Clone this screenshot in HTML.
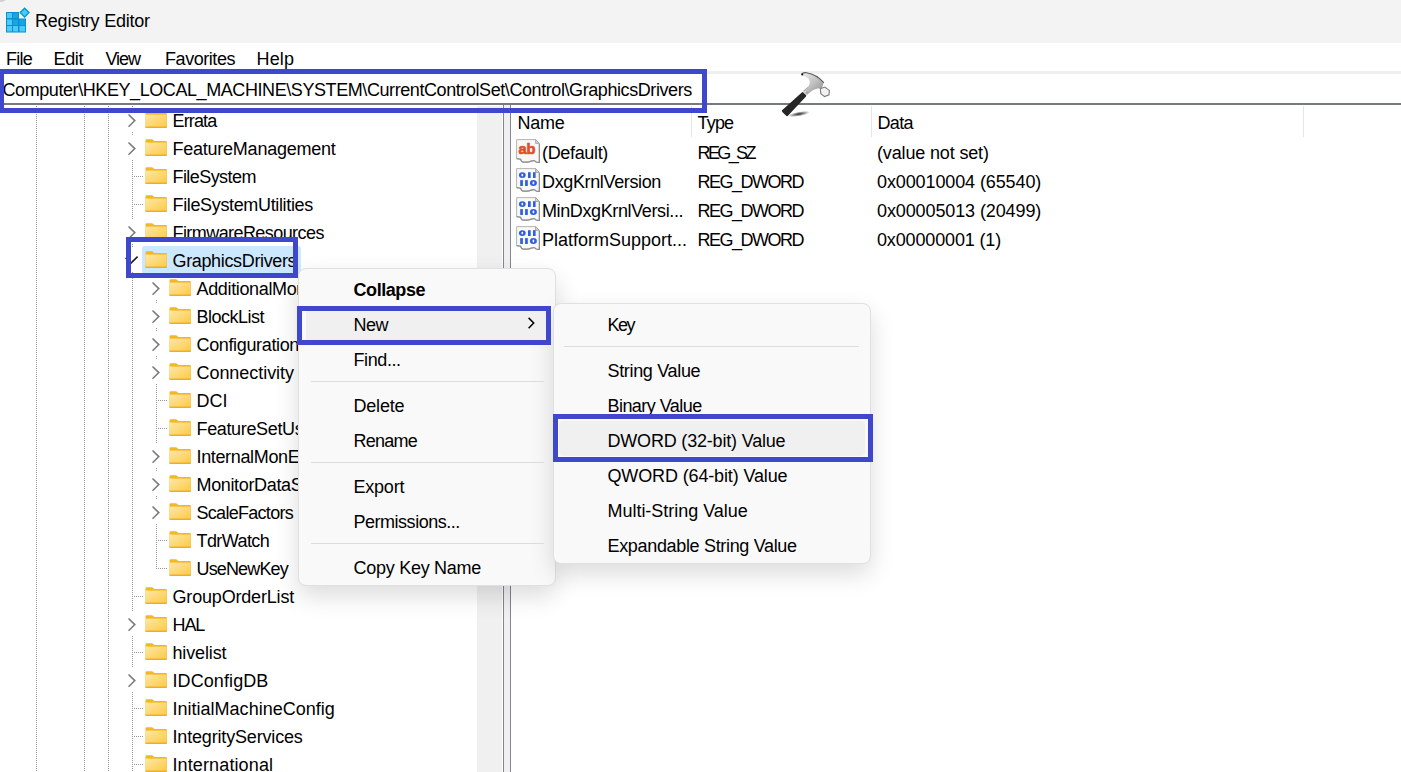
<!DOCTYPE html>
<html><head><meta charset="utf-8">
<style>
*{margin:0;padding:0;box-sizing:border-box}
html,body{width:1401px;height:772px;overflow:hidden;background:#fff;position:relative;font-family:"Liberation Sans",sans-serif;color:#000}
.a{position:absolute}
.t{position:absolute;font-size:18px;line-height:20px;white-space:nowrap}
.dv{position:absolute;width:1px;background-image:repeating-linear-gradient(to bottom,#9a9a9a 0 1px,transparent 1px 2px)}
.dh{position:absolute;height:1px;background-image:repeating-linear-gradient(to right,#9a9a9a 0 1px,transparent 1px 2px)}
.box{position:absolute;border:5px solid #3f48cc}
.fold{position:absolute;width:22px;height:17px}
.chev{position:absolute;width:10px;height:16px}
.cw{position:absolute;background:#fff;width:16px;height:24px}
</style></head><body>
<svg width="0" height="0" style="position:absolute"><defs>
<linearGradient id="fg" x1="0" y1="0" x2="1" y2="1"><stop offset="0" stop-color="#fee7a6"/><stop offset="1" stop-color="#fcca46"/></linearGradient>
<linearGradient id="hm" x1="0" y1="0" x2="1" y2="1"><stop offset="0" stop-color="#f2f2f2"/><stop offset="0.6" stop-color="#b9b9b9"/><stop offset="1" stop-color="#8c8c8c"/></linearGradient>
<radialGradient id="sh" cx="0.5" cy="0.5" r="0.5"><stop offset="0" stop-color="rgba(0,0,0,0.85)"/><stop offset="1" stop-color="rgba(0,0,0,0)"/></radialGradient>
</defs></svg>

<div class="a" style="left:0;top:0;width:1401px;height:43px;background:#f3f3f3"></div>
<div class="a" style="left:-6px;top:-4px;width:12px;height:6px;border-radius:50%;background:#cfcfcf"></div>
<svg class="a" style="left:5px;top:7px" width="26" height="27" viewBox="0 0 26 27">
  <rect x="1" y="5" width="13" height="7" fill="#0a8fd2"/>
  <rect x="1" y="11.5" width="20" height="14" fill="#0a8fd2"/>
  <rect x="2" y="6" width="5" height="5" fill="#4ccbf7"/>
  <rect x="8" y="6" width="5" height="5" fill="#17a6de"/>
  <rect x="2" y="12.5" width="5" height="5.5" fill="#4ccbf7"/>
  <rect x="8" y="12.5" width="5" height="5.5" fill="#17a6de"/>
  <rect x="14.5" y="12.5" width="5.5" height="5.5" fill="#17a6de"/>
  <rect x="2" y="19" width="5" height="5.5" fill="#4ccbf7"/>
  <rect x="8" y="19" width="5" height="5.5" fill="#4ccbf7"/>
  <rect x="14.5" y="19" width="5.5" height="5.5" fill="#4ccbf7"/>
  <path d="M19.6 1.2 L24 5.6 L19.6 10 L15.2 5.6 Z" fill="#4ccbf7" stroke="#0a8fd2" stroke-width="1.3"/>
</svg>
<div class="t" style="left:35px;top:11px;letter-spacing:-0.21px;">Registry Editor</div>
<div class="t" style="left:6px;top:49px;letter-spacing:-0.77px;">File</div>
<div class="t" style="left:53.6px;top:49px;letter-spacing:-0.37px;">Edit</div>
<div class="t" style="left:105.4px;top:49px;letter-spacing:-1.0px;">View</div>
<div class="t" style="left:165px;top:49px;letter-spacing:-0.44px;">Favorites</div>
<div class="t" style="left:256.6px;top:49px;letter-spacing:0.1px;">Help</div>
<div class="a" style="left:0;top:71px;width:1401px;height:3px;background:#efefef"></div>
<div class="a" style="left:0;top:103px;width:1401px;height:2px;background:#767a7f"></div>
<div class="t" style="left:2.5px;top:80px;letter-spacing:-0.42px;">Computer\HKEY_LOCAL_MACHINE\SYSTEM\CurrentControlSet\Control\GraphicsDrivers</div>
<svg class="a" style="left:775px;top:68px" width="60" height="54" viewBox="0 0 60 54">
<ellipse cx="24" cy="46" rx="11" ry="2.4" fill="url(#sh)" transform="rotate(-10 24 46)"/>
<path d="M28 23 L33.5 18.2 L37.5 21.8 L32 27 Z" fill="#a9a9a9"/>
<path d="M29.5 24.2 L34.5 19.6" stroke="#e0e0e0" stroke-width="1.2"/>
<path d="M8.2 41.2 L26.8 24.4 Q27.6 23.8 28.3 24.4 L31 27 Q31.6 27.7 31 28.4 L13.2 47.6 Q12.2 48.7 11.2 47.8 L7.3 43.9 Q6.4 42.9 7.2 42 Z" fill="#262626"/>
<path d="M26.4 6.4 Q27.4 4.4 30.6 4.5 Q41 5.8 49 14.6 L46.6 20.6 L42.4 20.4 Q38.2 21.2 34.3 24.8 L30.8 22.2 Q34.8 17.6 34.8 13.8 Q34 9.2 27.6 8.1 Q26.3 7.6 26.4 6.4 Z" fill="url(#hm)"/>
<path d="M27 5.6 Q29 4.3 31.5 4.7 Q41.5 6.2 48.8 14.6" fill="none" stroke="#5a5a5a" stroke-width="1.1"/>
<path d="M45.3 20.8 L49.8 19 L54.4 22.4 L54 26.8 L49.6 28.6 L45.8 25.6 Z" fill="#f2f2f2" stroke="#7c7c7c" stroke-width="1.1"/>
<circle cx="27.2" cy="6.4" r="1.1" fill="#1a1a1a"/>
</svg>
<div class="a" style="left:477px;top:106px;width:25px;height:666px;background:#f0f0f0"></div>
<div class="a" style="left:503px;top:105px;width:1px;height:667px;background:#80868b"></div>
<div class="a" style="left:504px;top:105px;width:6px;height:667px;background:#f0f0f0"></div>
<div class="a" style="left:510px;top:105px;width:1px;height:667px;background:#80868b"></div>
<div class="a" style="left:0;top:105px;width:477px;height:667px;overflow:hidden">
<div class="dv" style="left:36px;top:1px;height:667px"></div>
<div class="dv" style="left:84px;top:1px;height:667px"></div>
<div class="dv" style="left:108px;top:1px;height:667px"></div>
<div class="dv" style="left:132px;top:1px;height:667px"></div>
<div class="dv" style="left:156px;top:167px;height:297px"></div>
<div class="cw" style="left:124px;top:3px"></div>
<svg class="chev" style="left:127px;top:8px" width="10" height="16" viewBox="0 0 10 16"><path d="M1.5 1.5 L7.8 7.6 L1.5 13.7" fill="none" stroke="#7d7d7d" stroke-width="1.6"/></svg>
<svg class="fold" style="left:145px;top:6px" width="22" height="17" viewBox="0 0 22 17"><path d="M0.5 1.2 Q0.5 0.2 1.5 0.2 L7 0.2 Q7.8 0.2 8.3 0.9 L9.2 2 L21 2 Q21.8 2 21.8 2.8 L21.8 16 Q21.8 16.8 21 16.8 L1.3 16.8 Q0.5 16.8 0.5 16 Z" fill="#f4b622"/>
<rect x="0.5" y="3.6" width="21" height="12.4" fill="url(#fg)"/>
<rect x="0.5" y="15.6" width="21.3" height="1.2" fill="#eaa91c"/></svg>
<div class="t" style="left:172.5px;top:6px;letter-spacing:-0.86px;">Errata</div>
<div class="cw" style="left:124px;top:31px"></div>
<svg class="chev" style="left:127px;top:36px" width="10" height="16" viewBox="0 0 10 16"><path d="M1.5 1.5 L7.8 7.6 L1.5 13.7" fill="none" stroke="#7d7d7d" stroke-width="1.6"/></svg>
<svg class="fold" style="left:145px;top:34px" width="22" height="17" viewBox="0 0 22 17"><path d="M0.5 1.2 Q0.5 0.2 1.5 0.2 L7 0.2 Q7.8 0.2 8.3 0.9 L9.2 2 L21 2 Q21.8 2 21.8 2.8 L21.8 16 Q21.8 16.8 21 16.8 L1.3 16.8 Q0.5 16.8 0.5 16 Z" fill="#f4b622"/>
<rect x="0.5" y="3.6" width="21" height="12.4" fill="url(#fg)"/>
<rect x="0.5" y="15.6" width="21.3" height="1.2" fill="#eaa91c"/></svg>
<div class="t" style="left:172.5px;top:34px;letter-spacing:-0.24px;">FeatureManagement</div>
<div class="dh" style="left:132px;top:71px;width:11px"></div>
<svg class="fold" style="left:145px;top:62px" width="22" height="17" viewBox="0 0 22 17"><path d="M0.5 1.2 Q0.5 0.2 1.5 0.2 L7 0.2 Q7.8 0.2 8.3 0.9 L9.2 2 L21 2 Q21.8 2 21.8 2.8 L21.8 16 Q21.8 16.8 21 16.8 L1.3 16.8 Q0.5 16.8 0.5 16 Z" fill="#f4b622"/>
<rect x="0.5" y="3.6" width="21" height="12.4" fill="url(#fg)"/>
<rect x="0.5" y="15.6" width="21.3" height="1.2" fill="#eaa91c"/></svg>
<div class="t" style="left:172.5px;top:62px;letter-spacing:-0.57px;">FileSystem</div>
<div class="dh" style="left:132px;top:99px;width:11px"></div>
<svg class="fold" style="left:145px;top:90px" width="22" height="17" viewBox="0 0 22 17"><path d="M0.5 1.2 Q0.5 0.2 1.5 0.2 L7 0.2 Q7.8 0.2 8.3 0.9 L9.2 2 L21 2 Q21.8 2 21.8 2.8 L21.8 16 Q21.8 16.8 21 16.8 L1.3 16.8 Q0.5 16.8 0.5 16 Z" fill="#f4b622"/>
<rect x="0.5" y="3.6" width="21" height="12.4" fill="url(#fg)"/>
<rect x="0.5" y="15.6" width="21.3" height="1.2" fill="#eaa91c"/></svg>
<div class="t" style="left:172.5px;top:90px;letter-spacing:-0.35px;">FileSystemUtilities</div>
<div class="cw" style="left:124px;top:115px"></div>
<svg class="chev" style="left:127px;top:120px" width="10" height="16" viewBox="0 0 10 16"><path d="M1.5 1.5 L7.8 7.6 L1.5 13.7" fill="none" stroke="#7d7d7d" stroke-width="1.6"/></svg>
<svg class="fold" style="left:145px;top:118px" width="22" height="17" viewBox="0 0 22 17"><path d="M0.5 1.2 Q0.5 0.2 1.5 0.2 L7 0.2 Q7.8 0.2 8.3 0.9 L9.2 2 L21 2 Q21.8 2 21.8 2.8 L21.8 16 Q21.8 16.8 21 16.8 L1.3 16.8 Q0.5 16.8 0.5 16 Z" fill="#f4b622"/>
<rect x="0.5" y="3.6" width="21" height="12.4" fill="url(#fg)"/>
<rect x="0.5" y="15.6" width="21.3" height="1.2" fill="#eaa91c"/></svg>
<div class="t" style="left:172.5px;top:118px;letter-spacing:-0.57px;">FirmwareResources</div>
<div class="cw" style="left:124px;top:143px"></div>
<div class="a" style="left:142px;top:141px;width:159px;height:28px;background:#cce8ff;border-radius:3px"></div>
<svg class="a" style="left:123px;top:148px" width="16" height="16" viewBox="0 0 16 16"><path d="M2.6 4.7 L8 10.1 L14.6 3.6" fill="none" stroke="#1c1c1c" stroke-width="1.6"/></svg>
<svg class="fold" style="left:145px;top:146px" width="22" height="17" viewBox="0 0 22 17"><path d="M0.5 1.2 Q0.5 0.2 1.5 0.2 L7 0.2 Q7.8 0.2 8.3 0.9 L9.2 2 L21 2 Q21.8 2 21.8 2.8 L21.8 16 Q21.8 16.8 21 16.8 L1.3 16.8 Q0.5 16.8 0.5 16 Z" fill="#f4b622"/>
<rect x="0.5" y="3.6" width="21" height="12.4" fill="url(#fg)"/>
<rect x="0.5" y="15.6" width="21.3" height="1.2" fill="#eaa91c"/></svg>
<div class="t" style="left:172.5px;top:146px;letter-spacing:-0.35px;">GraphicsDrivers</div>
<div class="cw" style="left:148px;top:171px"></div>
<svg class="chev" style="left:151px;top:176px" width="10" height="16" viewBox="0 0 10 16"><path d="M1.5 1.5 L7.8 7.6 L1.5 13.7" fill="none" stroke="#7d7d7d" stroke-width="1.6"/></svg>
<svg class="fold" style="left:169px;top:174px" width="22" height="17" viewBox="0 0 22 17"><path d="M0.5 1.2 Q0.5 0.2 1.5 0.2 L7 0.2 Q7.8 0.2 8.3 0.9 L9.2 2 L21 2 Q21.8 2 21.8 2.8 L21.8 16 Q21.8 16.8 21 16.8 L1.3 16.8 Q0.5 16.8 0.5 16 Z" fill="#f4b622"/>
<rect x="0.5" y="3.6" width="21" height="12.4" fill="url(#fg)"/>
<rect x="0.5" y="15.6" width="21.3" height="1.2" fill="#eaa91c"/></svg>
<div class="t" style="left:196.5px;top:174px;letter-spacing:-0.35px;">AdditionalMonitors</div>
<div class="cw" style="left:148px;top:199px"></div>
<svg class="chev" style="left:151px;top:204px" width="10" height="16" viewBox="0 0 10 16"><path d="M1.5 1.5 L7.8 7.6 L1.5 13.7" fill="none" stroke="#7d7d7d" stroke-width="1.6"/></svg>
<svg class="fold" style="left:169px;top:202px" width="22" height="17" viewBox="0 0 22 17"><path d="M0.5 1.2 Q0.5 0.2 1.5 0.2 L7 0.2 Q7.8 0.2 8.3 0.9 L9.2 2 L21 2 Q21.8 2 21.8 2.8 L21.8 16 Q21.8 16.8 21 16.8 L1.3 16.8 Q0.5 16.8 0.5 16 Z" fill="#f4b622"/>
<rect x="0.5" y="3.6" width="21" height="12.4" fill="url(#fg)"/>
<rect x="0.5" y="15.6" width="21.3" height="1.2" fill="#eaa91c"/></svg>
<div class="t" style="left:196.5px;top:202px;letter-spacing:-0.49px;">BlockList</div>
<div class="cw" style="left:148px;top:227px"></div>
<svg class="chev" style="left:151px;top:232px" width="10" height="16" viewBox="0 0 10 16"><path d="M1.5 1.5 L7.8 7.6 L1.5 13.7" fill="none" stroke="#7d7d7d" stroke-width="1.6"/></svg>
<svg class="fold" style="left:169px;top:230px" width="22" height="17" viewBox="0 0 22 17"><path d="M0.5 1.2 Q0.5 0.2 1.5 0.2 L7 0.2 Q7.8 0.2 8.3 0.9 L9.2 2 L21 2 Q21.8 2 21.8 2.8 L21.8 16 Q21.8 16.8 21 16.8 L1.3 16.8 Q0.5 16.8 0.5 16 Z" fill="#f4b622"/>
<rect x="0.5" y="3.6" width="21" height="12.4" fill="url(#fg)"/>
<rect x="0.5" y="15.6" width="21.3" height="1.2" fill="#eaa91c"/></svg>
<div class="t" style="left:196.5px;top:230px;letter-spacing:-0.35px;">Configuration</div>
<div class="cw" style="left:148px;top:255px"></div>
<svg class="chev" style="left:151px;top:260px" width="10" height="16" viewBox="0 0 10 16"><path d="M1.5 1.5 L7.8 7.6 L1.5 13.7" fill="none" stroke="#7d7d7d" stroke-width="1.6"/></svg>
<svg class="fold" style="left:169px;top:258px" width="22" height="17" viewBox="0 0 22 17"><path d="M0.5 1.2 Q0.5 0.2 1.5 0.2 L7 0.2 Q7.8 0.2 8.3 0.9 L9.2 2 L21 2 Q21.8 2 21.8 2.8 L21.8 16 Q21.8 16.8 21 16.8 L1.3 16.8 Q0.5 16.8 0.5 16 Z" fill="#f4b622"/>
<rect x="0.5" y="3.6" width="21" height="12.4" fill="url(#fg)"/>
<rect x="0.5" y="15.6" width="21.3" height="1.2" fill="#eaa91c"/></svg>
<div class="t" style="left:196.5px;top:258px;letter-spacing:-0.05px;">Connectivity</div>
<div class="dh" style="left:156px;top:295px;width:11px"></div>
<svg class="fold" style="left:169px;top:286px" width="22" height="17" viewBox="0 0 22 17"><path d="M0.5 1.2 Q0.5 0.2 1.5 0.2 L7 0.2 Q7.8 0.2 8.3 0.9 L9.2 2 L21 2 Q21.8 2 21.8 2.8 L21.8 16 Q21.8 16.8 21 16.8 L1.3 16.8 Q0.5 16.8 0.5 16 Z" fill="#f4b622"/>
<rect x="0.5" y="3.6" width="21" height="12.4" fill="url(#fg)"/>
<rect x="0.5" y="15.6" width="21.3" height="1.2" fill="#eaa91c"/></svg>
<div class="t" style="left:196.5px;top:286px;letter-spacing:0.05px;">DCI</div>
<div class="dh" style="left:156px;top:323px;width:11px"></div>
<svg class="fold" style="left:169px;top:314px" width="22" height="17" viewBox="0 0 22 17"><path d="M0.5 1.2 Q0.5 0.2 1.5 0.2 L7 0.2 Q7.8 0.2 8.3 0.9 L9.2 2 L21 2 Q21.8 2 21.8 2.8 L21.8 16 Q21.8 16.8 21 16.8 L1.3 16.8 Q0.5 16.8 0.5 16 Z" fill="#f4b622"/>
<rect x="0.5" y="3.6" width="21" height="12.4" fill="url(#fg)"/>
<rect x="0.5" y="15.6" width="21.3" height="1.2" fill="#eaa91c"/></svg>
<div class="t" style="left:196.5px;top:314px;letter-spacing:-0.35px;">FeatureSetUsage</div>
<div class="cw" style="left:148px;top:339px"></div>
<svg class="chev" style="left:151px;top:344px" width="10" height="16" viewBox="0 0 10 16"><path d="M1.5 1.5 L7.8 7.6 L1.5 13.7" fill="none" stroke="#7d7d7d" stroke-width="1.6"/></svg>
<svg class="fold" style="left:169px;top:342px" width="22" height="17" viewBox="0 0 22 17"><path d="M0.5 1.2 Q0.5 0.2 1.5 0.2 L7 0.2 Q7.8 0.2 8.3 0.9 L9.2 2 L21 2 Q21.8 2 21.8 2.8 L21.8 16 Q21.8 16.8 21 16.8 L1.3 16.8 Q0.5 16.8 0.5 16 Z" fill="#f4b622"/>
<rect x="0.5" y="3.6" width="21" height="12.4" fill="url(#fg)"/>
<rect x="0.5" y="15.6" width="21.3" height="1.2" fill="#eaa91c"/></svg>
<div class="t" style="left:196.5px;top:342px;letter-spacing:-0.35px;">InternalMonEdid</div>
<div class="cw" style="left:148px;top:367px"></div>
<svg class="chev" style="left:151px;top:372px" width="10" height="16" viewBox="0 0 10 16"><path d="M1.5 1.5 L7.8 7.6 L1.5 13.7" fill="none" stroke="#7d7d7d" stroke-width="1.6"/></svg>
<svg class="fold" style="left:169px;top:370px" width="22" height="17" viewBox="0 0 22 17"><path d="M0.5 1.2 Q0.5 0.2 1.5 0.2 L7 0.2 Q7.8 0.2 8.3 0.9 L9.2 2 L21 2 Q21.8 2 21.8 2.8 L21.8 16 Q21.8 16.8 21 16.8 L1.3 16.8 Q0.5 16.8 0.5 16 Z" fill="#f4b622"/>
<rect x="0.5" y="3.6" width="21" height="12.4" fill="url(#fg)"/>
<rect x="0.5" y="15.6" width="21.3" height="1.2" fill="#eaa91c"/></svg>
<div class="t" style="left:196.5px;top:370px;letter-spacing:-0.35px;">MonitorDataStore</div>
<div class="cw" style="left:148px;top:395px"></div>
<svg class="chev" style="left:151px;top:400px" width="10" height="16" viewBox="0 0 10 16"><path d="M1.5 1.5 L7.8 7.6 L1.5 13.7" fill="none" stroke="#7d7d7d" stroke-width="1.6"/></svg>
<svg class="fold" style="left:169px;top:398px" width="22" height="17" viewBox="0 0 22 17"><path d="M0.5 1.2 Q0.5 0.2 1.5 0.2 L7 0.2 Q7.8 0.2 8.3 0.9 L9.2 2 L21 2 Q21.8 2 21.8 2.8 L21.8 16 Q21.8 16.8 21 16.8 L1.3 16.8 Q0.5 16.8 0.5 16 Z" fill="#f4b622"/>
<rect x="0.5" y="3.6" width="21" height="12.4" fill="url(#fg)"/>
<rect x="0.5" y="15.6" width="21.3" height="1.2" fill="#eaa91c"/></svg>
<div class="t" style="left:196.5px;top:398px;letter-spacing:-0.71px;">ScaleFactors</div>
<div class="dh" style="left:156px;top:435px;width:11px"></div>
<svg class="fold" style="left:169px;top:426px" width="22" height="17" viewBox="0 0 22 17"><path d="M0.5 1.2 Q0.5 0.2 1.5 0.2 L7 0.2 Q7.8 0.2 8.3 0.9 L9.2 2 L21 2 Q21.8 2 21.8 2.8 L21.8 16 Q21.8 16.8 21 16.8 L1.3 16.8 Q0.5 16.8 0.5 16 Z" fill="#f4b622"/>
<rect x="0.5" y="3.6" width="21" height="12.4" fill="url(#fg)"/>
<rect x="0.5" y="15.6" width="21.3" height="1.2" fill="#eaa91c"/></svg>
<div class="t" style="left:196.5px;top:426px;letter-spacing:-0.59px;">TdrWatch</div>
<div class="dh" style="left:156px;top:463px;width:11px"></div>
<svg class="fold" style="left:169px;top:454px" width="22" height="17" viewBox="0 0 22 17"><path d="M0.5 1.2 Q0.5 0.2 1.5 0.2 L7 0.2 Q7.8 0.2 8.3 0.9 L9.2 2 L21 2 Q21.8 2 21.8 2.8 L21.8 16 Q21.8 16.8 21 16.8 L1.3 16.8 Q0.5 16.8 0.5 16 Z" fill="#f4b622"/>
<rect x="0.5" y="3.6" width="21" height="12.4" fill="url(#fg)"/>
<rect x="0.5" y="15.6" width="21.3" height="1.2" fill="#eaa91c"/></svg>
<div class="t" style="left:196.5px;top:454px;letter-spacing:-0.85px;">UseNewKey</div>
<div class="dh" style="left:132px;top:491px;width:11px"></div>
<svg class="fold" style="left:145px;top:482px" width="22" height="17" viewBox="0 0 22 17"><path d="M0.5 1.2 Q0.5 0.2 1.5 0.2 L7 0.2 Q7.8 0.2 8.3 0.9 L9.2 2 L21 2 Q21.8 2 21.8 2.8 L21.8 16 Q21.8 16.8 21 16.8 L1.3 16.8 Q0.5 16.8 0.5 16 Z" fill="#f4b622"/>
<rect x="0.5" y="3.6" width="21" height="12.4" fill="url(#fg)"/>
<rect x="0.5" y="15.6" width="21.3" height="1.2" fill="#eaa91c"/></svg>
<div class="t" style="left:172.5px;top:482px;letter-spacing:-0.18px;">GroupOrderList</div>
<div class="cw" style="left:124px;top:507px"></div>
<svg class="chev" style="left:127px;top:512px" width="10" height="16" viewBox="0 0 10 16"><path d="M1.5 1.5 L7.8 7.6 L1.5 13.7" fill="none" stroke="#7d7d7d" stroke-width="1.6"/></svg>
<svg class="fold" style="left:145px;top:510px" width="22" height="17" viewBox="0 0 22 17"><path d="M0.5 1.2 Q0.5 0.2 1.5 0.2 L7 0.2 Q7.8 0.2 8.3 0.9 L9.2 2 L21 2 Q21.8 2 21.8 2.8 L21.8 16 Q21.8 16.8 21 16.8 L1.3 16.8 Q0.5 16.8 0.5 16 Z" fill="#f4b622"/>
<rect x="0.5" y="3.6" width="21" height="12.4" fill="url(#fg)"/>
<rect x="0.5" y="15.6" width="21.3" height="1.2" fill="#eaa91c"/></svg>
<div class="t" style="left:172.5px;top:510px;letter-spacing:-1.1px;">HAL</div>
<div class="dh" style="left:132px;top:547px;width:11px"></div>
<svg class="fold" style="left:145px;top:538px" width="22" height="17" viewBox="0 0 22 17"><path d="M0.5 1.2 Q0.5 0.2 1.5 0.2 L7 0.2 Q7.8 0.2 8.3 0.9 L9.2 2 L21 2 Q21.8 2 21.8 2.8 L21.8 16 Q21.8 16.8 21 16.8 L1.3 16.8 Q0.5 16.8 0.5 16 Z" fill="#f4b622"/>
<rect x="0.5" y="3.6" width="21" height="12.4" fill="url(#fg)"/>
<rect x="0.5" y="15.6" width="21.3" height="1.2" fill="#eaa91c"/></svg>
<div class="t" style="left:172.5px;top:538px;letter-spacing:-0.14px;">hivelist</div>
<div class="cw" style="left:124px;top:563px"></div>
<svg class="chev" style="left:127px;top:568px" width="10" height="16" viewBox="0 0 10 16"><path d="M1.5 1.5 L7.8 7.6 L1.5 13.7" fill="none" stroke="#7d7d7d" stroke-width="1.6"/></svg>
<svg class="fold" style="left:145px;top:566px" width="22" height="17" viewBox="0 0 22 17"><path d="M0.5 1.2 Q0.5 0.2 1.5 0.2 L7 0.2 Q7.8 0.2 8.3 0.9 L9.2 2 L21 2 Q21.8 2 21.8 2.8 L21.8 16 Q21.8 16.8 21 16.8 L1.3 16.8 Q0.5 16.8 0.5 16 Z" fill="#f4b622"/>
<rect x="0.5" y="3.6" width="21" height="12.4" fill="url(#fg)"/>
<rect x="0.5" y="15.6" width="21.3" height="1.2" fill="#eaa91c"/></svg>
<div class="t" style="left:172.5px;top:566px;letter-spacing:0.09px;">IDConfigDB</div>
<div class="dh" style="left:132px;top:603px;width:11px"></div>
<svg class="fold" style="left:145px;top:594px" width="22" height="17" viewBox="0 0 22 17"><path d="M0.5 1.2 Q0.5 0.2 1.5 0.2 L7 0.2 Q7.8 0.2 8.3 0.9 L9.2 2 L21 2 Q21.8 2 21.8 2.8 L21.8 16 Q21.8 16.8 21 16.8 L1.3 16.8 Q0.5 16.8 0.5 16 Z" fill="#f4b622"/>
<rect x="0.5" y="3.6" width="21" height="12.4" fill="url(#fg)"/>
<rect x="0.5" y="15.6" width="21.3" height="1.2" fill="#eaa91c"/></svg>
<div class="t" style="left:172.5px;top:594px;letter-spacing:0.01px;">InitialMachineConfig</div>
<div class="dh" style="left:132px;top:631px;width:11px"></div>
<svg class="fold" style="left:145px;top:622px" width="22" height="17" viewBox="0 0 22 17"><path d="M0.5 1.2 Q0.5 0.2 1.5 0.2 L7 0.2 Q7.8 0.2 8.3 0.9 L9.2 2 L21 2 Q21.8 2 21.8 2.8 L21.8 16 Q21.8 16.8 21 16.8 L1.3 16.8 Q0.5 16.8 0.5 16 Z" fill="#f4b622"/>
<rect x="0.5" y="3.6" width="21" height="12.4" fill="url(#fg)"/>
<rect x="0.5" y="15.6" width="21.3" height="1.2" fill="#eaa91c"/></svg>
<div class="t" style="left:172.5px;top:622px;letter-spacing:-0.17px;">IntegrityServices</div>
<div class="dh" style="left:132px;top:659px;width:11px"></div>
<svg class="fold" style="left:145px;top:650px" width="22" height="17" viewBox="0 0 22 17"><path d="M0.5 1.2 Q0.5 0.2 1.5 0.2 L7 0.2 Q7.8 0.2 8.3 0.9 L9.2 2 L21 2 Q21.8 2 21.8 2.8 L21.8 16 Q21.8 16.8 21 16.8 L1.3 16.8 Q0.5 16.8 0.5 16 Z" fill="#f4b622"/>
<rect x="0.5" y="3.6" width="21" height="12.4" fill="url(#fg)"/>
<rect x="0.5" y="15.6" width="21.3" height="1.2" fill="#eaa91c"/></svg>
<div class="t" style="left:172.5px;top:650px;letter-spacing:0.12px;">International</div>
</div>
<div class="a" style="left:691px;top:106px;width:1px;height:31px;background:#e5e5e5"></div>
<div class="a" style="left:871px;top:106px;width:1px;height:31px;background:#e5e5e5"></div>
<div class="a" style="left:1303px;top:106px;width:1px;height:31px;background:#e5e5e5"></div>
<div class="t" style="left:517.5px;top:113px;letter-spacing:-0.27px;">Name</div>
<div class="t" style="left:697.5px;top:113px;letter-spacing:-0.8px;">Type</div>
<div class="t" style="left:877.5px;top:113px;letter-spacing:-0.63px;">Data</div>
<svg class="a" style="left:516px;top:139px" width="24" height="24" viewBox="0 0 24 24"><path d="M0.6 0.6 L19.6 0.6 L23.4 4.4 L23.4 23.4 L20.5 23.4 Q18.8 21.2 16.5 21.8 L14.5 22.3 Q13.5 23.2 11 23.1 L7 23.1 Q5.2 23.1 4.6 20.2 L0.6 19.6 Z" fill="#f8f8f8" stroke="#b4b4b4" stroke-width="1"/>
<path d="M23.4 5 L23.4 23.4 L20.6 23.4" fill="none" stroke="#8e8e8e" stroke-width="1.3"/>
<path d="M0.6 19.6 L4.6 20.2 Q5.2 23.1 7 23.1 L11 23.1 Q13.5 23.2 14.5 22.3 L16.5 21.8 Q18.8 21.2 20.5 23.4" fill="none" stroke="#8e8e8e" stroke-width="1.2"/>
<path d="M19.6 0.6 L19.6 4.4 L23.4 4.4 Z" fill="#d4d4d4" stroke="#9a9a9a" stroke-width="0.8"/>
<text x="2.4" y="15.2" font-family="Liberation Sans" font-weight="bold" font-size="14.6" fill="#e0512b" stroke="#e0512b" stroke-width="0.7" letter-spacing="-0.1">ab</text></svg>
<div class="t" style="left:542px;top:143px;letter-spacing:-0.34px;">(Default)</div>
<div class="t" style="left:697.5px;top:143px;letter-spacing:-2.6px;">REG_SZ</div>
<div class="t" style="left:877px;top:143px;letter-spacing:-0.15px;">(value not set)</div>
<svg class="a" style="left:516px;top:168px" width="24" height="24" viewBox="0 0 24 24"><path d="M0.6 0.6 L19.6 0.6 L23.4 4.4 L23.4 23.4 L20.5 23.4 Q18.8 21.2 16.5 21.8 L14.5 22.3 Q13.5 23.2 11 23.1 L7 23.1 Q5.2 23.1 4.6 20.2 L0.6 19.6 Z" fill="#f8f8f8" stroke="#b4b4b4" stroke-width="1"/>
<path d="M23.4 5 L23.4 23.4 L20.6 23.4" fill="none" stroke="#8e8e8e" stroke-width="1.3"/>
<path d="M0.6 19.6 L4.6 20.2 Q5.2 23.1 7 23.1 L11 23.1 Q13.5 23.2 14.5 22.3 L16.5 21.8 Q18.8 21.2 20.5 23.4" fill="none" stroke="#8e8e8e" stroke-width="1.2"/>
<path d="M19.6 0.6 L19.6 4.4 L23.4 4.4 Z" fill="#d4d4d4" stroke="#9a9a9a" stroke-width="0.8"/>
<g fill="#2f5ee0"><ellipse cx="6.3" cy="7.1" rx="3.4" ry="2.9"/><rect x="12" y="4.2" width="2.7" height="5.8"/><rect x="17" y="4.2" width="2.6" height="5.8"/>
<rect x="4.2" y="12.1" width="2.7" height="5.9"/><rect x="9.1" y="12.1" width="2.7" height="5.9"/><ellipse cx="17.4" cy="15" rx="3.5" ry="2.9"/></g>
<g fill="#f8f8f8"><ellipse cx="6.3" cy="7.1" rx="0.9" ry="1.4"/><ellipse cx="17.4" cy="15" rx="0.9" ry="1.4"/></g></svg>
<div class="t" style="left:542px;top:172px;letter-spacing:-0.36px;">DxgKrnlVersion</div>
<div class="t" style="left:697.5px;top:172px;letter-spacing:-1.5px;">REG_DWORD</div>
<div class="t" style="left:877px;top:172px;letter-spacing:-0.11px;">0x00010004 (65540)</div>
<svg class="a" style="left:516px;top:197px" width="24" height="24" viewBox="0 0 24 24"><path d="M0.6 0.6 L19.6 0.6 L23.4 4.4 L23.4 23.4 L20.5 23.4 Q18.8 21.2 16.5 21.8 L14.5 22.3 Q13.5 23.2 11 23.1 L7 23.1 Q5.2 23.1 4.6 20.2 L0.6 19.6 Z" fill="#f8f8f8" stroke="#b4b4b4" stroke-width="1"/>
<path d="M23.4 5 L23.4 23.4 L20.6 23.4" fill="none" stroke="#8e8e8e" stroke-width="1.3"/>
<path d="M0.6 19.6 L4.6 20.2 Q5.2 23.1 7 23.1 L11 23.1 Q13.5 23.2 14.5 22.3 L16.5 21.8 Q18.8 21.2 20.5 23.4" fill="none" stroke="#8e8e8e" stroke-width="1.2"/>
<path d="M19.6 0.6 L19.6 4.4 L23.4 4.4 Z" fill="#d4d4d4" stroke="#9a9a9a" stroke-width="0.8"/>
<g fill="#2f5ee0"><ellipse cx="6.3" cy="7.1" rx="3.4" ry="2.9"/><rect x="12" y="4.2" width="2.7" height="5.8"/><rect x="17" y="4.2" width="2.6" height="5.8"/>
<rect x="4.2" y="12.1" width="2.7" height="5.9"/><rect x="9.1" y="12.1" width="2.7" height="5.9"/><ellipse cx="17.4" cy="15" rx="3.5" ry="2.9"/></g>
<g fill="#f8f8f8"><ellipse cx="6.3" cy="7.1" rx="0.9" ry="1.4"/><ellipse cx="17.4" cy="15" rx="0.9" ry="1.4"/></g></svg>
<div class="t" style="left:542px;top:201px;letter-spacing:-0.38px;">MinDxgKrnlVersi...</div>
<div class="t" style="left:697.5px;top:201px;letter-spacing:-1.5px;">REG_DWORD</div>
<div class="t" style="left:877px;top:201px;letter-spacing:-0.11px;">0x00005013 (20499)</div>
<svg class="a" style="left:516px;top:226px" width="24" height="24" viewBox="0 0 24 24"><path d="M0.6 0.6 L19.6 0.6 L23.4 4.4 L23.4 23.4 L20.5 23.4 Q18.8 21.2 16.5 21.8 L14.5 22.3 Q13.5 23.2 11 23.1 L7 23.1 Q5.2 23.1 4.6 20.2 L0.6 19.6 Z" fill="#f8f8f8" stroke="#b4b4b4" stroke-width="1"/>
<path d="M23.4 5 L23.4 23.4 L20.6 23.4" fill="none" stroke="#8e8e8e" stroke-width="1.3"/>
<path d="M0.6 19.6 L4.6 20.2 Q5.2 23.1 7 23.1 L11 23.1 Q13.5 23.2 14.5 22.3 L16.5 21.8 Q18.8 21.2 20.5 23.4" fill="none" stroke="#8e8e8e" stroke-width="1.2"/>
<path d="M19.6 0.6 L19.6 4.4 L23.4 4.4 Z" fill="#d4d4d4" stroke="#9a9a9a" stroke-width="0.8"/>
<g fill="#2f5ee0"><ellipse cx="6.3" cy="7.1" rx="3.4" ry="2.9"/><rect x="12" y="4.2" width="2.7" height="5.8"/><rect x="17" y="4.2" width="2.6" height="5.8"/>
<rect x="4.2" y="12.1" width="2.7" height="5.9"/><rect x="9.1" y="12.1" width="2.7" height="5.9"/><ellipse cx="17.4" cy="15" rx="3.5" ry="2.9"/></g>
<g fill="#f8f8f8"><ellipse cx="6.3" cy="7.1" rx="0.9" ry="1.4"/><ellipse cx="17.4" cy="15" rx="0.9" ry="1.4"/></g></svg>
<div class="t" style="left:542px;top:230px;letter-spacing:0.0px;">PlatformSupport...</div>
<div class="t" style="left:697.5px;top:230px;letter-spacing:-1.5px;">REG_DWORD</div>
<div class="t" style="left:877px;top:230px;letter-spacing:-0.15px;">0x00000001 (1)</div>
<div class="a" style="left:298px;top:268px;width:258px;height:318px;background:#f9f9f9;border:1px solid #e0e0e0;border-radius:8px;box-shadow:0 10px 24px rgba(0,0,0,0.14)"></div>
<div class="a" style="left:553px;top:303px;width:318px;height:261px;background:#f9f9f9;border:1px solid #e0e0e0;border-radius:8px;box-shadow:0 10px 24px rgba(0,0,0,0.14)"></div>
<div class="a" style="left:306px;top:310px;width:244px;height:31px;background:#f0f0f0;border-radius:4px"></div>
<div class="a" style="left:559px;top:421px;width:306px;height:35px;background:#f0f0f0;border-radius:4px"></div>
<div class="a" style="left:311px;top:381px;width:233px;height:1px;background:#dcdcdc"></div>
<div class="a" style="left:311px;top:462px;width:233px;height:1px;background:#dcdcdc"></div>
<div class="a" style="left:311px;top:543px;width:233px;height:1px;background:#dcdcdc"></div>
<div class="a" style="left:564px;top:346px;width:295px;height:1px;background:#dcdcdc"></div>
<div class="t" style="left:353.5px;top:280px;letter-spacing:-0.43px;font-weight:bold">Collapse</div>
<div class="t" style="left:353.5px;top:315px;letter-spacing:-0.45px;">New</div>
<div class="t" style="left:353.5px;top:350px;letter-spacing:-0.4px;">Find...</div>
<div class="t" style="left:353.5px;top:396px;letter-spacing:-0.2px;">Delete</div>
<div class="t" style="left:353.5px;top:431px;letter-spacing:-0.74px;">Rename</div>
<div class="t" style="left:353.5px;top:477px;letter-spacing:-0.22px;">Export</div>
<div class="t" style="left:353.5px;top:512px;letter-spacing:-0.48px;">Permissions...</div>
<div class="t" style="left:353.5px;top:558px;letter-spacing:-0.27px;">Copy Key Name</div>
<svg class="a" style="left:526px;top:316px" width="10" height="15" viewBox="0 0 10 15"><path d="M2.6 1.9 L7.7 7 L2.6 12.2" fill="none" stroke="#000" stroke-width="1.5"/></svg>
<div class="t" style="left:607.5px;top:315px;letter-spacing:-1.5px;">Key</div>
<div class="t" style="left:607.5px;top:361px;letter-spacing:-0.33px;">String Value</div>
<div class="t" style="left:607.5px;top:396px;letter-spacing:-0.55px;">Binary Value</div>
<div class="t" style="left:607.5px;top:431px;letter-spacing:-0.19px;">DWORD (32-bit) Value</div>
<div class="t" style="left:607.5px;top:466px;letter-spacing:-0.14px;">QWORD (64-bit) Value</div>
<div class="t" style="left:607.5px;top:501px;letter-spacing:-0.03px;">Multi-String Value</div>
<div class="t" style="left:607.5px;top:536px;letter-spacing:-0.33px;">Expandable String Value</div>
<div class="box" style="left:-1px;top:69px;width:708px;height:44px"></div>
<div class="box" style="left:126px;top:237px;width:172px;height:41px"></div>
<div class="box" style="left:297px;top:306px;width:254px;height:39px"></div>
<div class="box" style="left:553px;top:414px;width:320px;height:48px"></div>
</body></html>
